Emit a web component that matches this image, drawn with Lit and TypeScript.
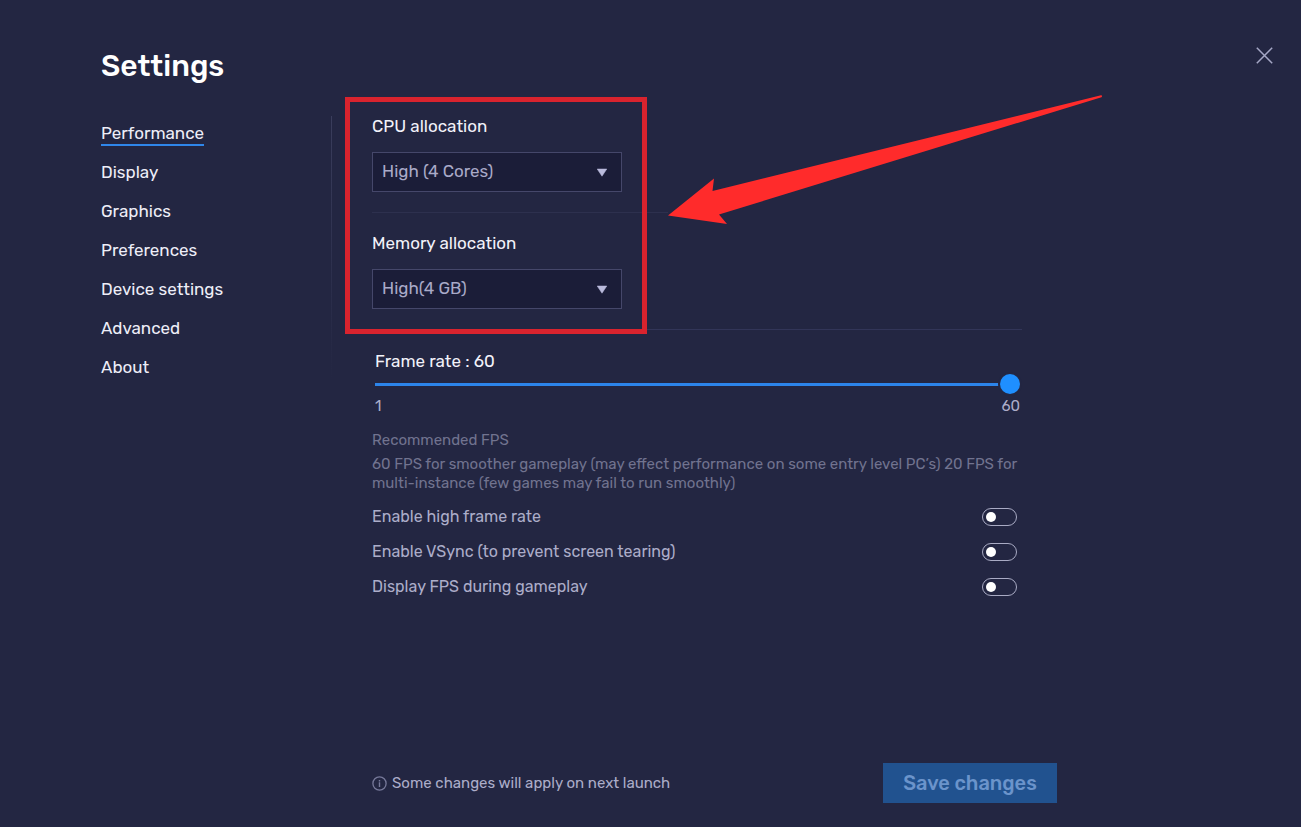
import { LitElement, html, css } from "lit";
import { customElement, property, state } from "lit/decorators.js";

@customElement("select-field")
class SelectField extends LitElement {
  @property() label = "";
  @property({ attribute: false }) options: string[] = [];

  static styles = css`
    :host { display: block; }
    label { display: block; color: #f2f2fa; font-size: 17px; line-height: 20px; margin-bottom: 16px; }
    .box { display: grid; width: 250px; max-width: 100%; align-items: center; }
    select {
      grid-area: 1 / 1;
      appearance: none;
      box-sizing: border-box;
      width: 100%;
      height: 40px;
      margin: 0;
      padding: 0 32px 2px 9px;
      border: 1px solid #45476a;
      border-radius: 0;
      background: #1b1d38;
      color: #a9aac8;
      font: inherit;
      font-size: 17px;
    }
    svg { grid-area: 1 / 1; justify-self: end; margin-right: 14px; pointer-events: none; }
  `;

  render() {
    return html`
      <label for="field">${this.label}</label>
      <div class="box">
        <select id="field">${this.options.map((o) => html`<option>${o}</option>`)}</select>
        <svg width="12" height="10" viewBox="0 0 12 10" aria-hidden="true">
          <path d="M1.2 2h9.600L6 9.200z" fill="#babbdc" stroke="#babbdc" stroke-width=".5" stroke-linejoin="round" />
        </svg>
      </div>
    `;
  }
}

@customElement("toggle-row")
class ToggleRow extends LitElement {
  @property() label = "";

  static styles = css`
    :host { display: block; }
    label {
      display: flex;
      justify-content: space-between;
      align-items: center;
      height: 35px;
      padding-right: 5px;
      color: #acadc9;
      font-size: 16px;
    }
    input {
      appearance: none;
      box-sizing: border-box;
      display: flex;
      align-items: center;
      flex: none;
      width: 35px;
      height: 18px;
      margin: 0;
      padding: 0 3px;
      border: 1px solid #a9abc4;
      border-radius: 9px;
    }
    input::before { content: ""; width: 10px; height: 10px; border-radius: 50%; background: #fff; }
    input:checked { justify-content: flex-end; background: #1f8bff; }
  `;

  render() {
    return html`<label><span>${this.label}</span><input type="checkbox" role="switch" /></label>`;
  }
}

@customElement("app-root")
class AppRoot extends LitElement {
  @state() private rate = 60;

  private pages = ["Performance", "Display", "Graphics", "Preferences", "Device settings", "Advanced", "About"];

  static styles = css`
    :host {
      display: flex;
      flex-direction: column;
      box-sizing: border-box;
      min-height: 100vh;
      padding: 47px 28px 24px 101px;
      background: #232642;
      font-family: Rubik, Inter, sans-serif;
    }
    header { display: flex; justify-content: space-between; align-items: flex-start; margin-bottom: 31px; }
    h1 { margin: 0; color: #fff; font-size: 30px; line-height: 38px; font-weight: 500; }
    .close { display: flex; padding: 0; border: 0; background: none; }
    .body { display: grid; grid-template-columns: 231px minmax(0, 650px); column-gap: 40px; }
    nav {
      display: flex;
      flex-direction: column;
      align-items: flex-start;
      gap: 15px;
      align-self: start;
      padding-top: 6px;
      border-right: 1px solid;
      border-image: linear-gradient(#3a3d5c, #34375600) 1;
    }
    nav a {
      box-sizing: border-box;
      height: 24px;
      border-bottom: 2px solid transparent;
      color: #eeeef8;
      font-size: 17px;
      line-height: 22px;
      text-decoration: none;
    }
    nav a.current { border-color: #2f86ea; }
    .allocations { position: relative; }
    .rule { height: 1px; margin: 20px 0; background: linear-gradient(90deg, #2d304e 296px, transparent 296px); }
    .rule.full { background: #323558; }
    .highlight {
      position: absolute;
      top: -19px;
      left: -27px;
      box-sizing: border-box;
      width: 302px;
      height: 237px;
      border: 5px solid #d9232e;
      pointer-events: none;
    }
    .arrow { position: absolute; top: -26px; left: 290px; pointer-events: none; }
    .rate { padding: 0 2px 0 3px; margin-bottom: 15px; }
    .rate label { display: block; color: #f2f2fa; font-size: 17px; line-height: 22px; }
    .rate input { appearance: none; display: block; width: 100%; height: 20px; margin: 2px 0; background: none; overflow: visible; }
    .rate input::-webkit-slider-runnable-track { height: 3px; background: #2c84ea; }
    .rate input::-webkit-slider-thumb {
      appearance: none;
      width: 20px;
      height: 20px;
      margin-top: -9px;
      border-radius: 50%;
      background: #1f8fff;
      box-shadow: 0 0 0 2px #232642;
    }
    .scale { display: flex; justify-content: space-between; color: #acadc9; font-size: 15px; line-height: 20px; }
    .hint { margin: 0 0 6px; color: #71738f; font-size: 15px; line-height: 19px; }
    .hint p { margin: 5px 0 0; }
    footer {
      display: flex;
      justify-content: space-between;
      align-items: center;
      max-width: 685px;
      margin: auto 0 0 271px;
    }
    .note { display: flex; align-items: center; gap: 5px; color: #acadc9; font-size: 15px; }
    .save {
      width: 174px;
      height: 40px;
      padding: 0;
      border: 0;
      background: #21528f;
      color: #6b94cb;
      font: inherit;
      font-size: 20px;
      font-weight: 500;
    }
  `;

  render() {
    return html`
      <header>
        <h1>Settings</h1>
        <button class="close" aria-label="Close">
          <svg width="17" height="17" viewBox="0 0 17 17">
            <path d="M.8.8l15.4 15.4M16.2.8L.8 16.2" stroke="#a5a7c5" stroke-width="1.5" />
          </svg>
        </button>
      </header>
      <div class="body">
        <nav>
          ${this.pages.map((p, i) => html`<a href="#" class=${i === 0 ? "current" : ""}>${p}</a>`)}
        </nav>
        <main>
          <div class="allocations">
            <select-field label="CPU allocation" .options=${["High (4 Cores)"]}></select-field>
            <div class="rule"></div>
            <select-field label="Memory allocation" .options=${["High(4 GB)"]}></select-field>
            <div class="highlight"></div>
            <svg class="arrow" width="448" height="140" viewBox="0 0 448 140" aria-hidden="true">
              <path d="M6 125.5L52 88.5L50.5 101L439 5.3Q441 5.5 439.500 7.200L57 124.500L65 134z" fill="#ff2b2b" />
            </svg>
          </div>
          <div class="rule full"></div>
          <div class="rate">
            <label for="rate">Frame rate : ${this.rate}</label>
            <input
              id="rate"
              type="range"
              min="1"
              max="60"
              .value=${String(this.rate)}
              @input=${(e: Event) => (this.rate = Number((e.target as HTMLInputElement).value))}
            />
            <div class="scale"><span>1</span><span>60</span></div>
          </div>
          <div class="hint">
            Recommended FPS
            <p>
              60 FPS for smoother gameplay (may effect performance on some entry level PC’s) 20 FPS for
              multi-instance (few games may fail to run smoothly)
            </p>
          </div>
          <toggle-row label="Enable high frame rate"></toggle-row>
          <toggle-row label="Enable VSync (to prevent screen tearing)"></toggle-row>
          <toggle-row label="Display FPS during gameplay"></toggle-row>
        </main>
      </div>
      <footer>
        <div class="note">
          <svg width="15" height="15" viewBox="0 0 15 15" fill="none" stroke="#77799a" aria-hidden="true">
            <circle cx="7.500" cy="7.500" r="6.600" stroke-width="1.300" />
            <path d="M7.500 4v1.400M7.500 6.200v4.800" stroke-width="1.400" />
          </svg>
          <span>Some changes will apply on next launch</span>
        </div>
        <button class="save">Save changes</button>
      </footer>
    `;
  }
}
